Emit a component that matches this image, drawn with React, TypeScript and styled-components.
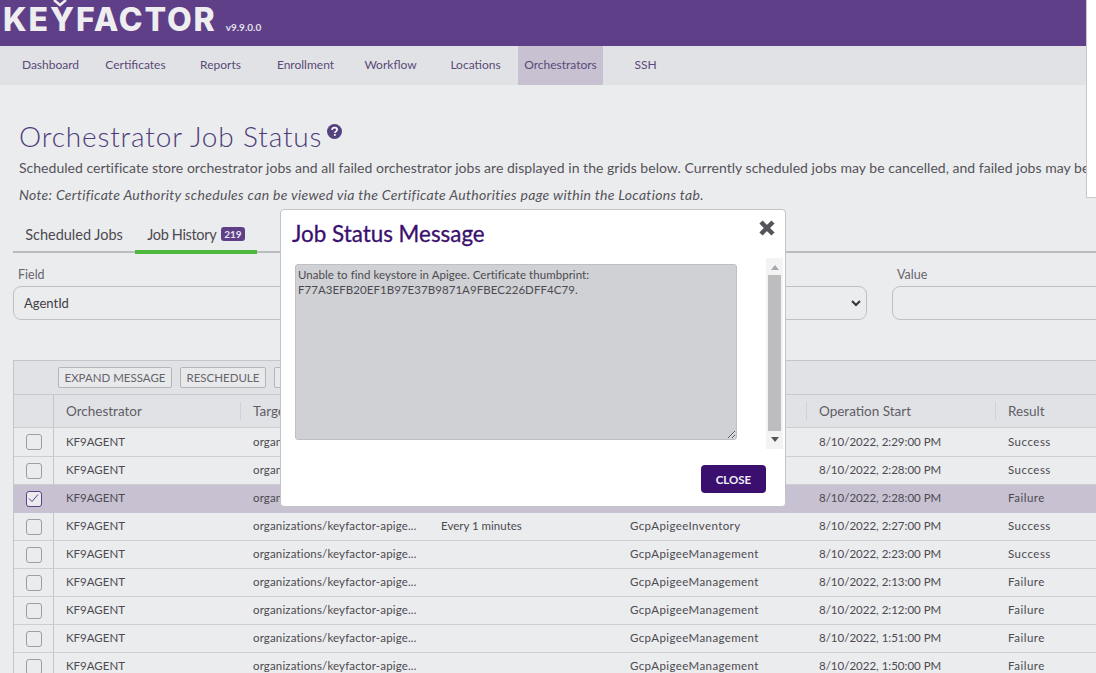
import React from 'react';
import styled, { createGlobalStyle } from 'styled-components';

const GlobalStyle = createGlobalStyle`
  html, body { margin: 0; padding: 0; height: 100%; overflow: hidden; background: #ebecee; }
  body { font-family: Lato, "Open Sans", sans-serif; color: #4c4a50; }
  * { box-sizing: border-box; }
`;

const Page = styled.div`
  position: relative;
  width: 1096px;
  height: 673px;
  overflow: hidden;
`;

const Header = styled.header`
  height: 46px;
  background: #5f3f88;
  display: flex;
  align-items: flex-end;
  padding: 0 0 10px 3px;
`;

const Logo = styled.div`
  position: relative;
  font-family: Inter, sans-serif;
  font-weight: 800;
  font-size: 32px;
  line-height: 32px;
  letter-spacing: 1.9px;
  color: #eeeef0;
`;

const LogoCaret = styled.svg`
  position: absolute;
  left: 50px;
  top: -4px;
`;

const Version = styled.span`
  font-size: 10px;
  font-weight: 700;
  color: #e4e0ea;
  margin: 0 0 3px 9px;
`;

const Nav = styled.nav`
  height: 39px;
  background: #e1e2e5;
  display: flex;
  padding-left: 8px;
`;

const NavItem = styled.a<{ $active?: boolean }>`
  width: 85px;
  display: flex;
  align-items: center;
  justify-content: center;
  padding-bottom: 2px;
  font-size: 12px;
  color: #5a4a78;
  background: ${p => (p.$active ? '#c8c1d2' : 'transparent')};
`;

const Content = styled.main`
  padding-top: 34px;
  width: 1300px;
`;

const Title = styled.h1`
  margin: 0 0 0 19px;
  font-size: 28px;
  font-weight: 300;
  line-height: 34px;
  color: #4e3c7a;
  display: flex;
  align-items: flex-start;
  letter-spacing: 0.85px;
`;

const HelpIcon = styled.svg`
  margin: 5px 0 0 5px;
`;

const Lead = styled.p<{ $note?: boolean }>`
  margin: ${p => (p.$note ? '9px' : '6px')} 0 0 19px;
  font-size: 14px;
  line-height: 18px;
  white-space: nowrap;
  font-style: ${p => (p.$note ? 'italic' : 'normal')};
  letter-spacing: ${p => (p.$note ? '0.31px' : '0.025px')};
  color: #55535a;
`;

const Tabs = styled.div`
  margin: 17px 0 0 13px;
  height: 32px;
  border-bottom: 2px solid #bcbcbe;
  display: flex;
`;

const Tab = styled.div<{ $active?: boolean }>`
  width: 122px;
  height: 33px;
  flex: none;
  display: flex;
  align-items: center;
  justify-content: center;
  gap: 5px;
  font-size: 14.5px;
  letter-spacing: ${p => (p.$active ? '-0.35px' : '0')};
  color: #4c4a50;
  padding-bottom: ${p => (p.$active ? '3px' : '7px')};
  ${p => p.$active && 'border-bottom: 4px solid #4fb83f;'}
`;

const Badge = styled.span`
  background: #5f3f88;
  color: #e8e4ee;
  font-size: 10px;
  font-weight: 700;
  letter-spacing: 0;
  padding: 1px 3px;
  border-radius: 3px;
  line-height: 12px;
`;

const Filters = styled.div`
  display: grid;
  grid-template-columns: 854px 300px;
  column-gap: 25px;
  margin: 14px 0 0 13px;
`;

const FieldLabel = styled.label`
  display: block;
  margin-left: 5px;
  font-size: 12.5px;
  line-height: 15px;
  color: #66656c;
`;

const FieldBox = styled.div`
  margin-top: 4px;
  height: 34px;
  border: 1px solid #bfc0c4;
  border-radius: 8px;
  display: flex;
  align-items: center;
  justify-content: space-between;
  padding: 0 5px 0 10px;
  font-size: 13px;
  color: #3f3e44;
`;

const Grid = styled.section`
  margin: 40px 0 0 13px;
  border-left: 1px solid #c4c5c9;
  border-top: 1px solid #c4c5c9;
`;

const Toolbar = styled.div`
  height: 34px;
  background: #e1e2e5;
  border-bottom: 1px solid #c8c9cd;
  display: flex;
  align-items: center;
  gap: 8px;
  padding-left: 44px;
`;

const ToolButton = styled.button`
  height: 21px;
  padding: 0 5.5px;
  font-family: inherit;
  font-size: 11.5px;
  color: #66656c;
  background: #e8e9eb;
  border: 1px solid #b4b5b9;
  border-radius: 2px;
`;

const Row = styled.div<{ $head?: boolean; $selected?: boolean; $first?: boolean }>`
  display: grid;
  grid-template-columns: 40px 186px 188px 189px 189px 189px 200px;
  height: ${p => (p.$head ? 33 : p.$first ? 29 : 28)}px;
  align-items: center;
  background: ${p => (p.$head ? '#e1e2e5' : p.$selected ? '#c8c1d2' : '#ebecee')};
  border-bottom: 1px solid ${p => (p.$selected ? '#c8c1d2' : '#cdced2')};
`;

const CheckCell = styled.div`
  height: 100%;
  border-right: 1px solid #c4c5c9;
  display: flex;
  align-items: center;
  justify-content: center;
`;

const Check = styled.span<{ $on?: boolean }>`
  width: 16px;
  height: 16px;
  border: 1px solid ${p => (p.$on ? '#5f3f88' : '#9d9ea2')};
  border-radius: 3px;
  background: #ebecee;
  display: flex;
  align-items: center;
  justify-content: center;
`;

const HeadCell = styled.div`
  height: 18px;
  line-height: 18px;
  padding-left: 12px;
  border-left: 1px solid #d0d1d4;
  font-size: 13.5px;
  color: #5f5e65;
  &:nth-child(2) { border-left: 0; }
`;

const Cell = styled.div<{ $spread?: number }>`
  padding: 0 0 2px 13px;
  font-size: 11.5px;
  letter-spacing: ${p => p.$spread ?? 0}px;
  color: #4c4a50;
  white-space: nowrap;
  overflow: hidden;
  &:nth-child(2) { padding-left: 12px; }
`;

const WhiteStrip = styled.div`
  position: absolute;
  top: 0;
  right: 0;
  width: 10px;
  height: 198px;
  background: #fff;
  border-left: 1px solid #c8c8cc;
  border-bottom: 1px solid #c8c8cc;
`;

const Modal = styled.div`
  position: absolute;
  left: 280px;
  top: 209px;
  width: 506px;
  height: 298px;
  background: #fff;
  border: 1px solid #c3c4c7;
  border-radius: 4px;
  padding: 9px 2px 0 11px;
  display: flex;
  flex-direction: column;
`;

const ModalHead = styled.div`
  display: flex;
  justify-content: space-between;
  align-items: flex-start;
  height: 39px;
  padding-right: 8px;
`;

const ModalTitle = styled.h2`
  margin: 0;
  font-size: 22.4px;
  line-height: 30px;
  font-weight: 400;
  -webkit-text-stroke: 0.3px #3a0f6e;
  color: #3a0f6e;
`;

const CloseX = styled.svg`
  margin: 0 -1px 0 0;
`;

const MessageRow = styled.div`
  display: flex;
  justify-content: space-between;
  height: 191px;
  margin-left: 3px;
`;

const MessageBox = styled.textarea`
  width: 442px;
  height: 176px;
  margin-top: 6px;
  padding: 2px;
  resize: both;
  background: #d0d1d5;
  border: 1px solid #bfc0c4;
  border-radius: 3px;
  font-family: inherit;
  font-size: 11.5px;
  line-height: 15px;
  letter-spacing: 0.05px;
  color: #4c4a50;
`;

const ScrollBar = styled.div`
  width: 17px;
  height: 191px;
  background: #f3f3f3;
  display: flex;
  flex-direction: column;
  align-items: center;
  justify-content: space-between;
  padding: 7px 0 7px;
`;

const ScrollThumb = styled.div`
  width: 13px;
  flex: 1;
  margin: 5px 0 6px;
  background: #bdbdbf;
`;

const ModalFoot = styled.div`
  display: flex;
  justify-content: flex-end;
  padding: 16px 17px 0 0;
`;

const CloseButton = styled.button`
  width: 65px;
  height: 28px;
  background: #3a0f6e;
  border: 0;
  border-radius: 4px;
  color: #f2eff6;
  font-family: inherit;
  font-size: 11.5px;
  font-weight: 700;
`;

const jobs = [
  ['', '', '8/10/2022, 2:29:00 PM', 'Success'],
  ['', '', '8/10/2022, 2:28:00 PM', 'Success'],
  ['', '', '8/10/2022, 2:28:00 PM', 'Failure'],
  ['Every 1 minutes', 'GcpApigeeInventory', '8/10/2022, 2:27:00 PM', 'Success'],
  ['', 'GcpApigeeManagement', '8/10/2022, 2:23:00 PM', 'Success'],
  ['', 'GcpApigeeManagement', '8/10/2022, 2:13:00 PM', 'Failure'],
  ['', 'GcpApigeeManagement', '8/10/2022, 2:12:00 PM', 'Failure'],
  ['', 'GcpApigeeManagement', '8/10/2022, 1:51:00 PM', 'Failure'],
  ['', 'GcpApigeeManagement', '8/10/2022, 1:50:00 PM', 'Failure'],
];

const navItems = ['Dashboard', 'Certificates', 'Reports', 'Enrollment', 'Workflow', 'Locations', 'Orchestrators', 'SSH'];

function App() {
  return (
    <Page>
      <GlobalStyle />
      <Header>
        <Logo>
          KEYFACTOR
          <LogoCaret width="14" height="8" viewBox="0 0 14 8">
            <path d="M1 0l6 5 6-5" fill="none" stroke="#eeeef0" strokeWidth="2.5" />
          </LogoCaret>
        </Logo>
        <Version>v9.9.0.0</Version>
      </Header>
      <Nav>
        {navItems.map(label => (
          <NavItem key={label} $active={label === 'Orchestrators'}>{label}</NavItem>
        ))}
      </Nav>
      <Content>
        <Title>
          Orchestrator Job Status
          <HelpIcon width="15" height="15" viewBox="0 0 15 15">
            <circle cx="7.5" cy="7.5" r="7.5" fill="#55437f" />
            <path d="M5 5.8c.2-1.5 1.2-2.2 2.6-2.2 1.5 0 2.5.8 2.5 2 0 1-.6 1.5-1.3 2-.6.4-.9.7-.9 1.4" fill="none" stroke="#fff" strokeWidth="1.7" />
            <rect x="6.9" y="10" width="1.8" height="1.8" fill="#fff" />
          </HelpIcon>
        </Title>
        <Lead>Scheduled certificate store orchestrator jobs and all failed orchestrator jobs are displayed in the grids below. Currently scheduled jobs may be cancelled, and failed jobs may be rescheduled.</Lead>
        <Lead $note>Note: Certificate Authority schedules can be viewed via the Certificate Authorities page within the Locations tab.</Lead>
        <Tabs>
          <Tab>Scheduled Jobs</Tab>
          <Tab $active>Job History <Badge>219</Badge></Tab>
        </Tabs>
        <Filters>
          <div>
            <FieldLabel>Field</FieldLabel>
            <FieldBox>
              AgentId
              <svg width="10" height="7" viewBox="0 0 10 7">
                <path d="M1 1l4 4 4-4" fill="none" stroke="#333" strokeWidth="2" />
              </svg>
            </FieldBox>
          </div>
          <div>
            <FieldLabel>Value</FieldLabel>
            <FieldBox />
          </div>
        </Filters>
        <Grid>
          <Toolbar>
            <ToolButton>EXPAND MESSAGE</ToolButton>
            <ToolButton>RESCHEDULE</ToolButton>
            <ToolButton>DELETE</ToolButton>
          </Toolbar>
          <Row $head>
            <CheckCell />
            <HeadCell>Orchestrator</HeadCell>
            <HeadCell>Target</HeadCell>
            <HeadCell>Schedule</HeadCell>
            <HeadCell>Type</HeadCell>
            <HeadCell>Operation Start</HeadCell>
            <HeadCell>Result</HeadCell>
          </Row>
          {jobs.map(([schedule, type, start, result], i) => (
            <Row key={i} $selected={i === 2} $first={i === 0}>
              <CheckCell>
                <Check $on={i === 2}>
                  {i === 2 && (
                    <svg width="11" height="9" viewBox="0 0 11 9">
                      <path d="M1 4.5l3 3 6-7" fill="none" stroke="#5f3f88" strokeWidth="1" />
                    </svg>
                  )}
                </Check>
              </CheckCell>
              <Cell>KF9AGENT</Cell>
              <Cell $spread={0.15}>organizations/keyfactor-apige...</Cell>
              <Cell>{schedule}</Cell>
              <Cell $spread={0.4}>{type}</Cell>
              <Cell>{start}</Cell>
              <Cell $spread={0.5}>{result}</Cell>
            </Row>
          ))}
        </Grid>
      </Content>
      <WhiteStrip />
      <Modal>
        <ModalHead>
          <ModalTitle>Job Status Message</ModalTitle>
          <CloseX width="18" height="18" viewBox="0 0 18 18">
            <path d="M3 3l12 12M15 3L3 15" stroke="#55565a" strokeWidth="4.5" />
          </CloseX>
        </ModalHead>
        <MessageRow>
          <MessageBox readOnly defaultValue={'Unable to find keystore in Apigee. Certificate thumbprint: F77A3EFB20EF1B97E37B9871A9FBEC226DFF4C79.'} />
          <ScrollBar>
            <svg width="8" height="5" viewBox="0 0 8 5"><path d="M4 0l4 5H0z" fill="#a9a4ad" /></svg>
            <ScrollThumb />
            <svg width="8" height="5" viewBox="0 0 8 5"><path d="M0 0h8L4 5z" fill="#55565a" /></svg>
          </ScrollBar>
        </MessageRow>
        <ModalFoot>
          <CloseButton>CLOSE</CloseButton>
        </ModalFoot>
      </Modal>
    </Page>
  );
}

export default App;
